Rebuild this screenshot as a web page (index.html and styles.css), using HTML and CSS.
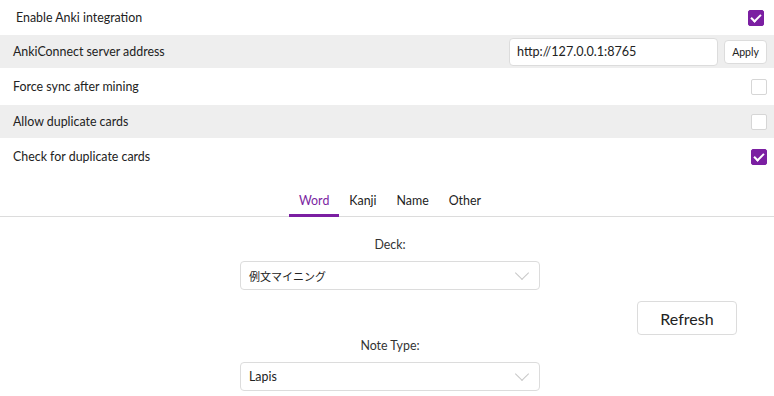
FILE: index.html
```html
<!DOCTYPE html>
<html>
<head>
  <link rel="stylesheet" href="styles.css">
</head>
<body>

<div class="settings">
  <div class="row row-first">
    <span class="label label-first">Enable Anki integration</span>
    <span class="check checked"></span>
  </div>
  <div class="row row-alt row-short">
    <span class="label">AnkiConnect server address</span>
    <div class="address">
      <input class="text-input" type="text" value="http://127.0.0.1:8765">
      <button class="apply">Apply</button>
    </div>
  </div>
  <div class="row">
    <span class="label">Force sync after mining</span>
    <span class="check"></span>
  </div>
  <div class="row row-alt row-short">
    <span class="label">Allow duplicate cards</span>
    <span class="check"></span>
  </div>
  <div class="row">
    <span class="label">Check for duplicate cards</span>
    <span class="check checked"></span>
  </div>
</div>

<div class="tabs">
  <span class="tab active">Word</span>
  <span class="tab">Kanji</span>
  <span class="tab">Name</span>
  <span class="tab">Other</span>
</div>

<div class="panel">
  <div class="field-label">Deck:</div>
  <div class="select"><span class="cjk">例文マイニング</span><span class="chevron"></span></div>
  <div class="refresh-row">
    <button class="refresh">Refresh</button>
  </div>
  <div class="field-label">Note Type:</div>
  <div class="select"><span>Lapis</span><span class="chevron"></span></div>
</div>

</body>
</html>
```

FILE: styles.css
```css
body {
  margin: 0;
  font-family: Lato, "Noto Sans CJK JP", sans-serif;
  font-size: 12.4px;
  color: #222;
  background: #fff;
}
.row {
  display: flex;
  align-items: center;
  justify-content: space-between;
  height: 37px;
  padding: 0 7px 0 13px;
}
.row-first {
  height: 35px;
  padding-right: 10px;
}
.row-short {
  height: 33px;
}
.row-alt {
  background-color: #eeeeee;
}
.label-first {
  padding-left: 3px;
}
.check {
  width: 14px;
  height: 14px;
  border: 1px solid #d6d6d6;
  border-radius: 2px;
  background: #fff;
  position: relative;
}
.checked {
  background: #7b1fa2;
  border-color: #7b1fa2;
}
.checked::after {
  content: "";
  position: absolute;
  left: 4px;
  top: 1px;
  width: 4px;
  height: 8px;
  border: solid #fff;
  border-width: 0 2px 2px 0;
  transform: rotate(45deg);
}
.address {
  display: flex;
  align-items: center;
  gap: 6px;
}
.text-input {
  width: 193px;
  height: 26px;
  padding: 0 7px;
  border: 1px solid #dcdcdc;
  border-radius: 4px;
  font-family: inherit;
  font-size: 12.6px;
  color: #222;
  box-sizing: content-box;
}
.apply {
  width: 43px;
  height: 24px;
  background: #fff;
  border: 1px solid #dcdcdc;
  border-radius: 4px;
  font-family: inherit;
  font-size: 10.5px;
  color: #222;
  padding: 0;
}
.tabs {
  display: flex;
  justify-content: center;
  border-bottom: 1px solid #dcdcdc;
  margin-top: 18px;
  padding-left: 6px;
}
.tab {
  padding: 0 10px 6px;
  border-bottom: 3px solid transparent;
  margin-bottom: -1px;
  color: #222;
}
.tab.active {
  color: #7b1fa2;
  border-bottom-color: #7b1fa2;
}
.panel {
  display: flex;
  flex-direction: column;
  align-items: center;
  padding-left: 6px;
}
.field-label {
  margin: 20px 0 9px;
  color: #333;
}
.select {
  display: flex;
  align-items: center;
  justify-content: space-between;
  width: 282px;
  height: 27px;
  padding: 0 8px;
  border: 1px solid #dcdcdc;
  border-radius: 4px;
}
.cjk {
  font-size: 11px;
}
.chevron {
  width: 9px;
  height: 9px;
  border: solid #c8c8c8;
  border-width: 0 1px 1px 0;
  transform: rotate(45deg);
  margin: 0 4px 6px 0;
}
.refresh-row {
  align-self: stretch;
  display: flex;
  justify-content: flex-end;
  padding-right: 37px;
  margin-top: 11px;
  margin-bottom: -17px;
}
.refresh {
  width: 100px;
  height: 34px;
  background: #fff;
  border: 1px solid #dcdcdc;
  border-radius: 4px;
  font-family: inherit;
  font-size: 16px;
  color: #222;
}
```
